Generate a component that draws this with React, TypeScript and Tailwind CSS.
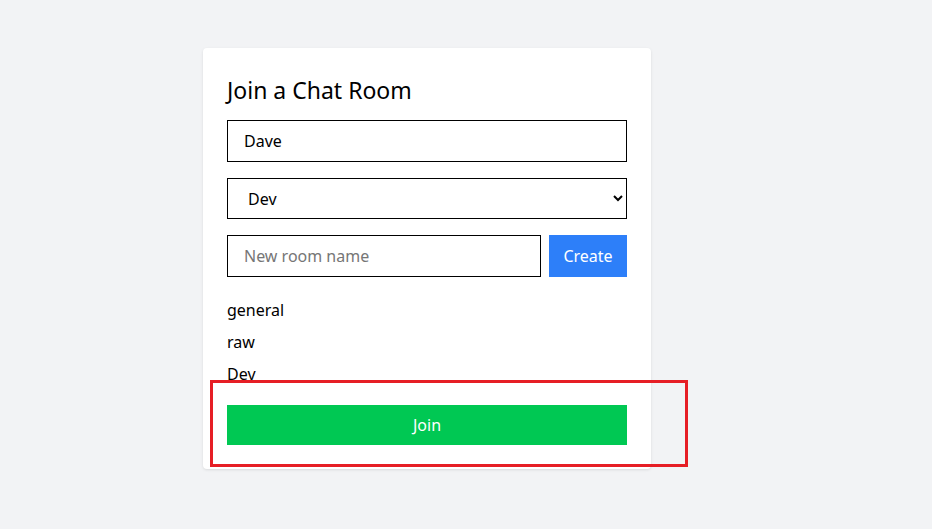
import React from "react";

export default function App() {
  return (
    <div
      className="min-h-[529px] w-full bg-[#f2f3f5] pt-12 pl-[203px]"
      style={{ fontFamily: '"Noto Sans", "Open Sans", sans-serif' }}
    >
      <div className="relative w-[448px]">
        <div className="rounded-[4px] bg-white p-6 shadow-[0_1px_3px_rgba(0,0,0,0.1)]">
          <h2 className="translate-y-[2px] text-[23px] leading-8 text-black">Join a Chat Room</h2>
          <input
            className="mt-4 block h-[42px] w-full border border-black px-4 text-[16px] text-black outline-none"
            defaultValue="Dave"
          />
          <select
            className="mt-4 block h-[41px] w-full border border-black bg-white px-4 text-[16px] text-black outline-none"
            defaultValue="Dev"
          >
            <option>general</option>
            <option>raw</option>
            <option>Dev</option>
          </select>
          <div className="mt-4 flex gap-2">
            <input
              className="block h-[42px] flex-1 border border-black px-4 text-[16px] text-black outline-none placeholder:text-[#767676]"
              placeholder="New room name"
            />
            <button className="h-[42px] w-[78px] bg-[#2d7ff9] text-[16px] text-white">Create</button>
          </div>
          <ul className="mt-4 text-[16px] text-black">
            <li className="translate-y-[1px] py-1 leading-6">general</li>
            <li className="translate-y-[1px] py-1 leading-6">raw</li>
            <li className="translate-y-[1px] py-1 leading-6">Dev</li>
          </ul>
          <button className="mt-4 block h-10 w-full bg-[#00c853] text-[16px] text-white">Join</button>
        </div>
        <div className="pointer-events-none absolute left-[7px] top-[332px] h-[87px] w-[478px] border-[3px] border-[#e61e25]" />
      </div>
    </div>
  );
}
